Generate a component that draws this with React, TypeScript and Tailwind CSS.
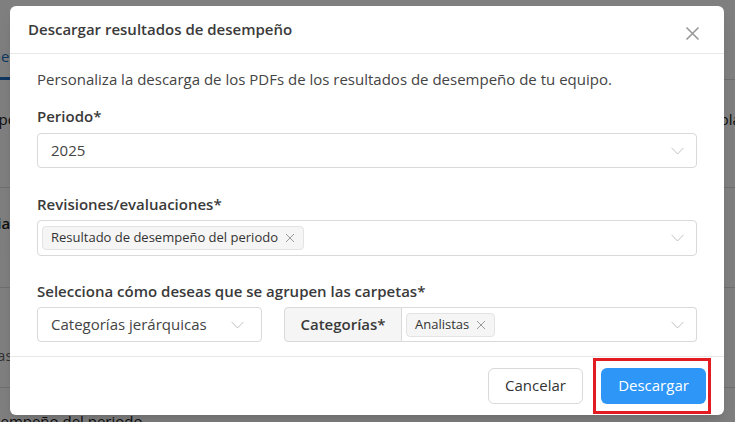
const font = { fontFamily: '"Open Sans", "Noto Sans", sans-serif' };

function Cross({ size, color, width }: { size: number; color: string; width: number }) {
  return (
    <svg width={size} height={size} viewBox="0 0 10 10" className="shrink-0">
      <path d="M1 1L9 9M9 1L1 9" stroke={color} strokeWidth={width} fill="none" />
    </svg>
  );
}

function Tag({ label }: { label: string }) {
  return (
    <span className="flex items-center gap-[7px] h-[24px] pl-[8px] pr-[8px] rounded-[4px] border border-[#e3e3e3] bg-[#f5f5f5] text-[13px] text-[#333]">
      {label}
      <Cross size={10} color="#9a9a9a" width={1} />
    </span>
  );
}

function Chevron() {
  return (
    <svg width="13" height="8" viewBox="0 0 13 8" className="shrink-0">
      <path d="M0.5 0.8L6.5 7L12.5 0.8" stroke="#c2c2c2" strokeWidth="1" fill="none" />
    </svg>
  );
}

function Background() {
  return (
    <div className="h-[422px] w-[735px] bg-white text-[#222] text-[15px]">
      <div className="h-[80px] border-b border-[#dedede] flex items-end">
        <div className="pb-[10px] border-b-[3px] border-[#1e6fc0] text-[#1e6fc0] -ml-[70px] pr-[20px] -mb-px">Indicaciones</div>
      </div>
      <div className="h-[108px] border-b border-[#dedede] flex items-start pt-[28px] justify-between">
        <span className="-ml-[72px]">de tu equipo</span>
        <span className="-mr-[40px]">plantilla</span>
      </div>
      <div className="h-[100px] border-b border-[#dedede] pt-[24px]">
        <div className="font-semibold -ml-[58px]">Eficiencia</div>
        <div className="-ml-[18px] text-[#666]">Co</div>
      </div>
      <div className="h-[100px] border-b border-[#dedede] pt-[56px]">
        <div className="text-[#666] -ml-[50px]">Analistas</div>
      </div>
      <div className="pt-[22px] -ml-[26px]">Desempeño del periodo</div>
    </div>
  );
}

export default function App() {
  return (
    <div className="relative h-[422px] w-[735px] overflow-hidden" style={font}>
      <Background />
      <div className="absolute inset-0 bg-black/50">
        <div className="absolute left-[10px] top-[6px] w-[714px] h-[409px] rounded-[6px] bg-white shadow-lg flex flex-col">
          <div className="h-[48px] shrink-0 flex items-center justify-between pl-[18px] pr-[24px] border-b border-[#e8e8e8]">
            <h3 className="text-[15px] font-semibold text-[#3a3a3a] -mt-[1px]">Descargar resultados de desempeño</h3>
            <div className="mt-[7px]">
              <Cross size={15} color="#999999" width={1.1} />
            </div>
          </div>

          <div className="flex-1 px-[27px] pt-[15px]">
            <p className="text-[15px] leading-[20px] text-[#444]">
              Personaliza la descarga de los PDFs de los resultados de desempeño de tu equipo.
            </p>

            <div className="mt-[17px]">
              <label className="block text-[15px] leading-[20px] font-semibold text-[#3a3a3a]">Periodo*</label>
              <div className="mt-[7px] h-[35px] flex items-center justify-between border border-[#d9d9d9] rounded-[4px] pl-[13px] pr-[12px]">
                <span className="text-[15px] text-[#444]">2025</span>
                <Chevron />
              </div>
            </div>

            <div className="mt-[26px]">
              <label className="block text-[15px] leading-[20px] font-semibold text-[#3a3a3a]">Revisiones/evaluaciones*</label>
              <div className="mt-[6px] h-[36px] flex items-center justify-between border border-[#d9d9d9] rounded-[4px] pl-[4px] pr-[12px]">
                <Tag label="Resultado de desempeño del periodo" />
                <Chevron />
              </div>
            </div>

            <div className="mt-[25px]">
              <label className="block text-[15px] leading-[20px] font-semibold text-[#3a3a3a]">
                Selecciona cómo deseas que se agrupen las carpetas*
              </label>
              <div className="mt-[6px] flex gap-[22px]">
                <div className="w-[225px] h-[35px] flex items-center justify-between border border-[#d9d9d9] rounded-[4px] pl-[13px] pr-[17px]">
                  <span className="text-[15px] text-[#444]">Categorías jerárquicas</span>
                  <Chevron />
                </div>
                <div className="flex-1 h-[35px] flex">
                  <div className="w-[118px] flex items-center justify-center bg-[#f5f5f5] border border-[#d9d9d9] rounded-l-[4px] text-[15px] font-semibold text-[#3a3a3a]">
                    Categorías*
                  </div>
                  <div className="flex-1 flex items-center justify-between border border-l-0 border-[#d9d9d9] rounded-r-[4px] pl-[4px] pr-[12px]">
                    <Tag label="Analistas" />
                    <Chevron />
                  </div>
                </div>
              </div>
            </div>
          </div>

          <div className="h-[59px] shrink-0 border-t border-[#e8e8e8] flex items-center justify-end gap-[18px] pr-[18px] pb-[1px]">
            <button className="h-[36px] w-[95px] rounded-[6px] border border-[#d9d9d9] bg-white text-[15px] text-[#333]">
              Cancelar
            </button>
            <div className="relative">
              <button className="h-[36px] w-[105px] rounded-[6px] bg-[#2d96f7] text-[15px] text-white">
                Descargar
              </button>
              <div className="absolute -left-[8px] -right-[5px] -top-[10px] -bottom-[10px] border-[3px] border-[#e31b23]" />
            </div>
          </div>
        </div>
      </div>
    </div>
  );
}
